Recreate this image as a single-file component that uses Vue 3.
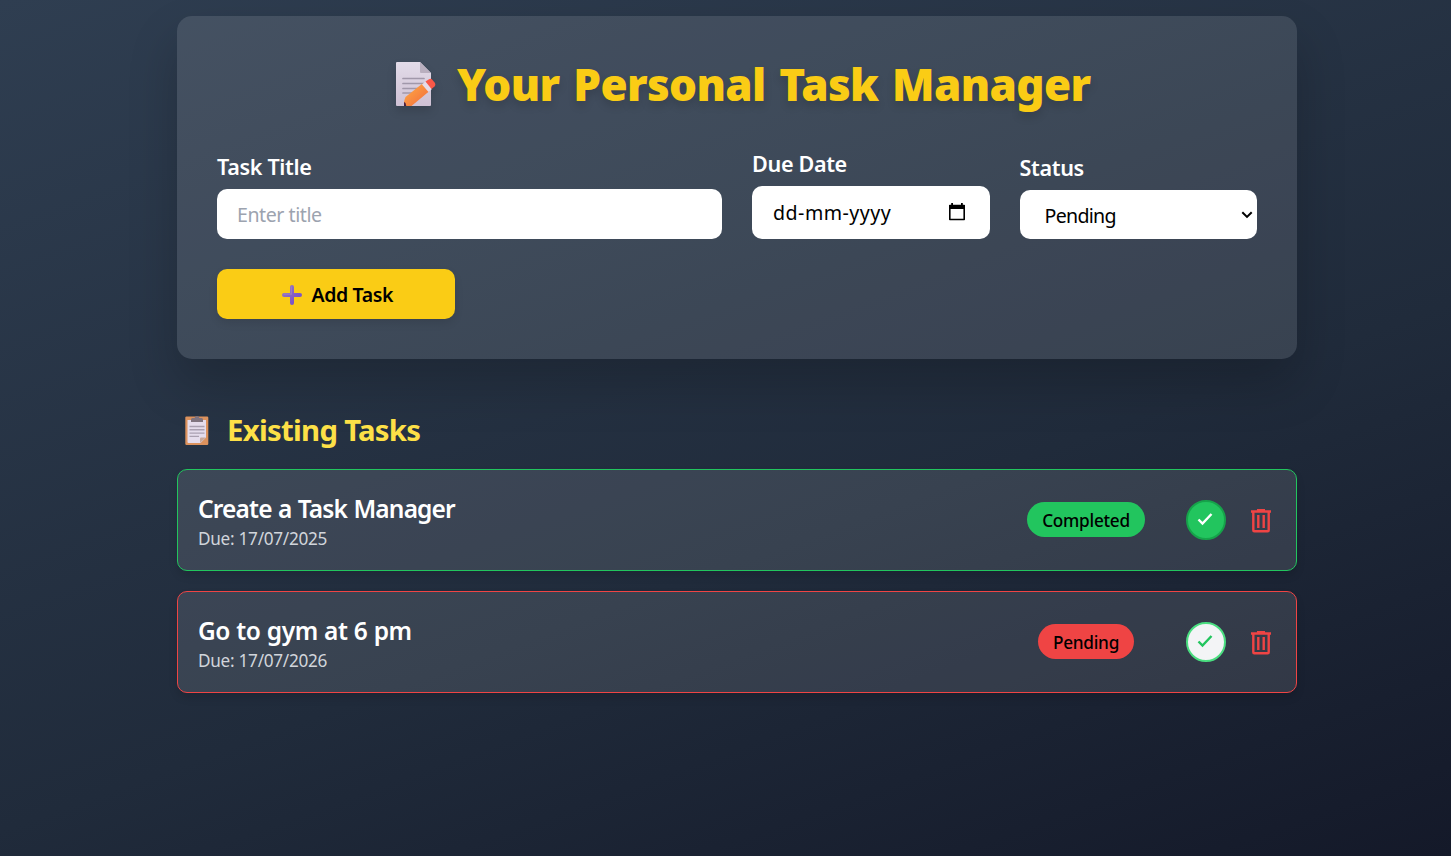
<script setup>
const tasks = [
  { title: 'Create a Task Manager', due: '17/07/2025', status: 'Completed' },
  { title: 'Go to gym at 6 pm', due: '17/07/2026', status: 'Pending' },
]
</script>

<template>
  <div class="page">
    <main class="container">
      <section class="panel">
        <h1 class="title">
          <svg class="memo" width="42" height="46" viewBox="0 0 42 46">
            <defs>
              <linearGradient id="sheet" x1="0" y1="0" x2="0" y2="1"><stop offset="0" stop-color="#e3dce9" /><stop offset="1" stop-color="#cfc1d4" /></linearGradient>
              <linearGradient id="wood" x1="0" y1="0" x2="1" y2="1"><stop offset="0" stop-color="#ffae45" /><stop offset="1" stop-color="#f2683c" /></linearGradient>
            </defs>
            <path d="M2 1h23l11 11v32q0 1-1 1H2q-1 0-1-1V2q0-1 1-1z" fill="url(#sheet)" />
            <path d="M25 1l11 11H26q-1 0-1-1z" fill="#b9afbf" />
            <path d="M8 17.500h21M8 22.500h21M8 27.500h19M8 32h12" stroke="#a198aa" stroke-width="1.700" stroke-linecap="round" />
            <path d="M9 45v-4.500l1.500-4.500L27.500 22.500l7 7.500L16.500 45z" fill="url(#wood)" />
            <path d="M9 45v-4l1.500 1 .8 3z" fill="#4b2140" />
            <path d="M27 23.500l3.500-3 6.500 7.500-3.500 3z" fill="#e6dce9" />
            <path d="M30.500 20.500l3.500-2.300q2-1 3.500.8l2.500 3q1 2-.5 3.500l-3 2.500z" fill="#fa5848" />
          </svg>
          <span class="title-text">Your Personal Task Manager</span>
        </h1>
        <form class="form" @submit.prevent>
          <div class="field wide">
            <label class="label">Task Title</label>
            <div class="control title-control"><span class="placeholder">Enter title</span></div>
          </div>
          <div class="field">
            <label class="label">Due Date</label>
            <div class="control date-control">
              <span class="date-text">dd-mm-yyyy</span>
              <svg width="18" height="20" viewBox="0 0 18 20">
                <path d="M1.800 3.500h14.400v14H1.800z" fill="none" stroke="#000" stroke-width="1.600" stroke-linejoin="round" />
                <path d="M1 3h16v4H1zM3.200 1h1.800v3H3.200zM13 1h1.800v3H13z" />
              </svg>
            </div>
          </div>
          <div class="field">
            <label class="label">Status</label>
            <div class="control select-control">
              <span class="select-text">Pending</span>
              <svg width="12" height="8" viewBox="0 0 12 8"><path d="M1.300 1.200L6 5.900l4.700-4.700" fill="none" stroke="#000" stroke-width="2" /></svg>
            </div>
          </div>
          <button class="add" type="submit">
            <svg width="20" height="20" viewBox="0 0 20 20">
              <defs><linearGradient id="plus" x1="0" y1="0" x2="1" y2="1"><stop offset="0" stop-color="#9b79c4" /><stop offset="1" stop-color="#7048c8" /></linearGradient></defs>
              <path d="M8 2q0-2 2-2t2 2v6h6q2 0 2 2t-2 2h-6v6q0 2-2 2t-2-2v-6H2q-2 0-2-2t2-2h6z" fill="url(#plus)" />
              <path d="M9.300 2v7.200H2" stroke="#9b80bd" stroke-width="1.300" fill="none" stroke-linecap="round" />
            </svg>
            <span class="add-text">Add Task</span>
          </button>
        </form>
      </section>

      <h2 class="subtitle">
        <svg width="24" height="30" viewBox="0 0 24 30">
          <rect x="0.300" y="0.500" width="23" height="28.500" rx="1.200" fill="#dc925d" />
          <path d="M2.500 4H21v17.500L15.500 27h-12q-1 0-1-1z" fill="#e5dcec" />
          <path d="M15 27v-4.500q0-1 1-1h5z" fill="#c9a89a" />
          <path d="M6 6V3.500Q6 2 7.500 2h2q.5-2 2.500-2t2.500 2h2Q18 2 18 3.500V6z" fill="#80747f" />
          <path d="M4.500 10.500h15M4.500 13.800h15M4.500 17.100h15M4.500 20.400h9.500" stroke="#aaa0b1" stroke-width="1.400" />
        </svg>
        <span class="subtitle-text">Existing Tasks</span>
      </h2>

      <ul class="list">
        <li v-for="task in tasks" :key="task.title" class="task" :class="task.status.toLowerCase()">
          <div class="info">
            <h3 class="name">{{ task.title }}</h3>
            <p class="due">Due: {{ task.due }}</p>
          </div>
          <div class="badge-cell"><span class="badge">{{ task.status }}</span></div>
          <button class="check" type="button">
            <svg width="16" height="14" viewBox="0 0 16 14"><path d="M1.500 7.500l4 4L14.500 2" fill="none" stroke="currentColor" stroke-width="2.400" /></svg>
          </button>
          <button class="trash" type="button">
            <svg width="20" height="24" viewBox="0 0 20 24">
              <path d="M0 1.200h6V0h8v1.200h6v2.600H0z" />
              <path d="M2.300 3v18.200q0 1 1 1h13.400q1 0 1-1V3" fill="none" stroke="currentColor" stroke-width="2.400" />
              <path d="M7.300 6v13M12.700 6v13" stroke="currentColor" stroke-width="2.400" />
            </svg>
          </button>
        </li>
      </ul>
    </main>
  </div>
</template>

<style>
body { margin: 0; }
</style>

<style scoped>
* { box-sizing: border-box; }
.page {
  height: 856px;
  overflow: hidden;
  padding-top: 16px;
  background: linear-gradient(160deg, #2f3e51, #202b3b 60%, #141929);
  font-family: "Noto Sans", "Open Sans", sans-serif;
  color: #fff;
}
.container { width: 1120px; margin-left: 177px; }
h1, h2, h3, p, ul { margin: 0; padding: 0; }
span, label, h3, p { white-space: nowrap; }
button { font: inherit; border: 0; padding: 0; }
.panel {
  height: 343px;
  padding: 40px;
  border-radius: 15px;
  background: rgba(255, 255, 255, 0.11);
  box-shadow: 0 25px 50px rgba(0, 0, 0, 0.2);
}
.title {
  display: flex;
  height: 56px;
  align-items: center;
  padding-left: 178px;
  gap: 20px;
  color: #facc15;
  font-size: 45px;
  line-height: 56px;
  font-weight: 900;
}
.title svg { filter: drop-shadow(0 5px 4px rgba(0, 0, 0, 0.13)); }
.title-text { font-size: 44px; letter-spacing: -0.660px; word-spacing: 3px; text-shadow: 0 5px 8px rgba(0, 0, 0, 0.15); }
.form { display: grid; grid-template-columns: repeat(4, 237.500px); column-gap: 30px; row-gap: 30px; padding-top: 34px; }
.field { height: 93px; display: flex; flex-direction: column; justify-content: flex-end; }
.wide { grid-column: span 2; }
.label { font-size: 21.600px; line-height: 30px; font-weight: 600; letter-spacing: -0.350px; margin-bottom: 7px; }
.control { display: flex; align-items: center; background: #fff; border-radius: 10px; color: #000; font-size: 19.600px; }
.title-control { height: 50px; padding-left: 20px; }
.placeholder { color: #9ca3af; letter-spacing: -0.450px; }
.date-control { height: 53px; padding: 0 24px 0 21px; justify-content: space-between; }
.date-control svg { margin-bottom: 2px; }
.date-text { letter-spacing: 0.500px; }
.select-control { height: 49px; padding: 0 4px 0 25px; justify-content: space-between; }
.select-text { letter-spacing: -0.700px; padding-top: 2px; }
.add {
  height: 50px;
  border-radius: 10px;
  background: #facc15;
  display: flex;
  align-items: center;
  justify-content: center;
  gap: 10px;
  padding: 1px 0 0 3px;
  font-size: 19.500px;
  font-weight: 600;
  letter-spacing: -0.400px;
  color: #000;
  box-shadow: 0 4px 8px rgba(0, 0, 0, 0.1);
}
.subtitle { display: flex; align-items: center; height: 40px; margin: 51px 0 19px 8px; gap: 18px; color: #fde047; font-size: 29.300px; font-weight: 700; letter-spacing: -0.700px; }
.subtitle svg { margin-top: 2px; }
.list { list-style: none; display: grid; gap: 20px; }
.task {
  display: flex;
  align-items: center;
  height: 102px;
  padding: 0 25px 0 20px;
  border: 1px solid #22c55e;
  border-radius: 10px;
  background: rgba(255, 255, 255, 0.11);
  box-shadow: 0 5px 8px rgba(0, 0, 0, 0.12);
}
.task.pending { border-color: #ef4444; }
.info { flex: 1; padding-top: 2px; }
.name { font-size: 24.500px; line-height: 34px; font-weight: 600; letter-spacing: -0.850px; word-spacing: 0.800px; }
.pending .name { letter-spacing: -0.450px; word-spacing: 0.400px; }
.due { font-size: 17.200px; line-height: 25px; letter-spacing: -0.280px; color: #d1d5db; }
.badge-cell { width: 118px; display: flex; justify-content: center; margin: 0 41px 2px 0; }
.badge { height: 35px; padding: 1px 15px 0; border-radius: 18px; font-size: 17.200px; letter-spacing: -0.250px; line-height: 35px; font-weight: 500; color: #000; background: #22c55e; }
.pending .badge { background: #ef4444; }
.check { width: 40px; height: 40px; border-radius: 50%; border: 2px solid #16a34a; background: #22c55e; color: #fff; display: grid; place-items: center; padding: 0 2px 2px 0; margin-right: 25px; }
.pending .check { background: #f3f4f6; border-color: #4ade80; color: #22c55e; }
.trash { background: none; color: #ef4444; width: 20px; height: 24px; display: flex; margin-top: 2px; }
.trash svg path:first-child { fill: currentColor; }
</style>
